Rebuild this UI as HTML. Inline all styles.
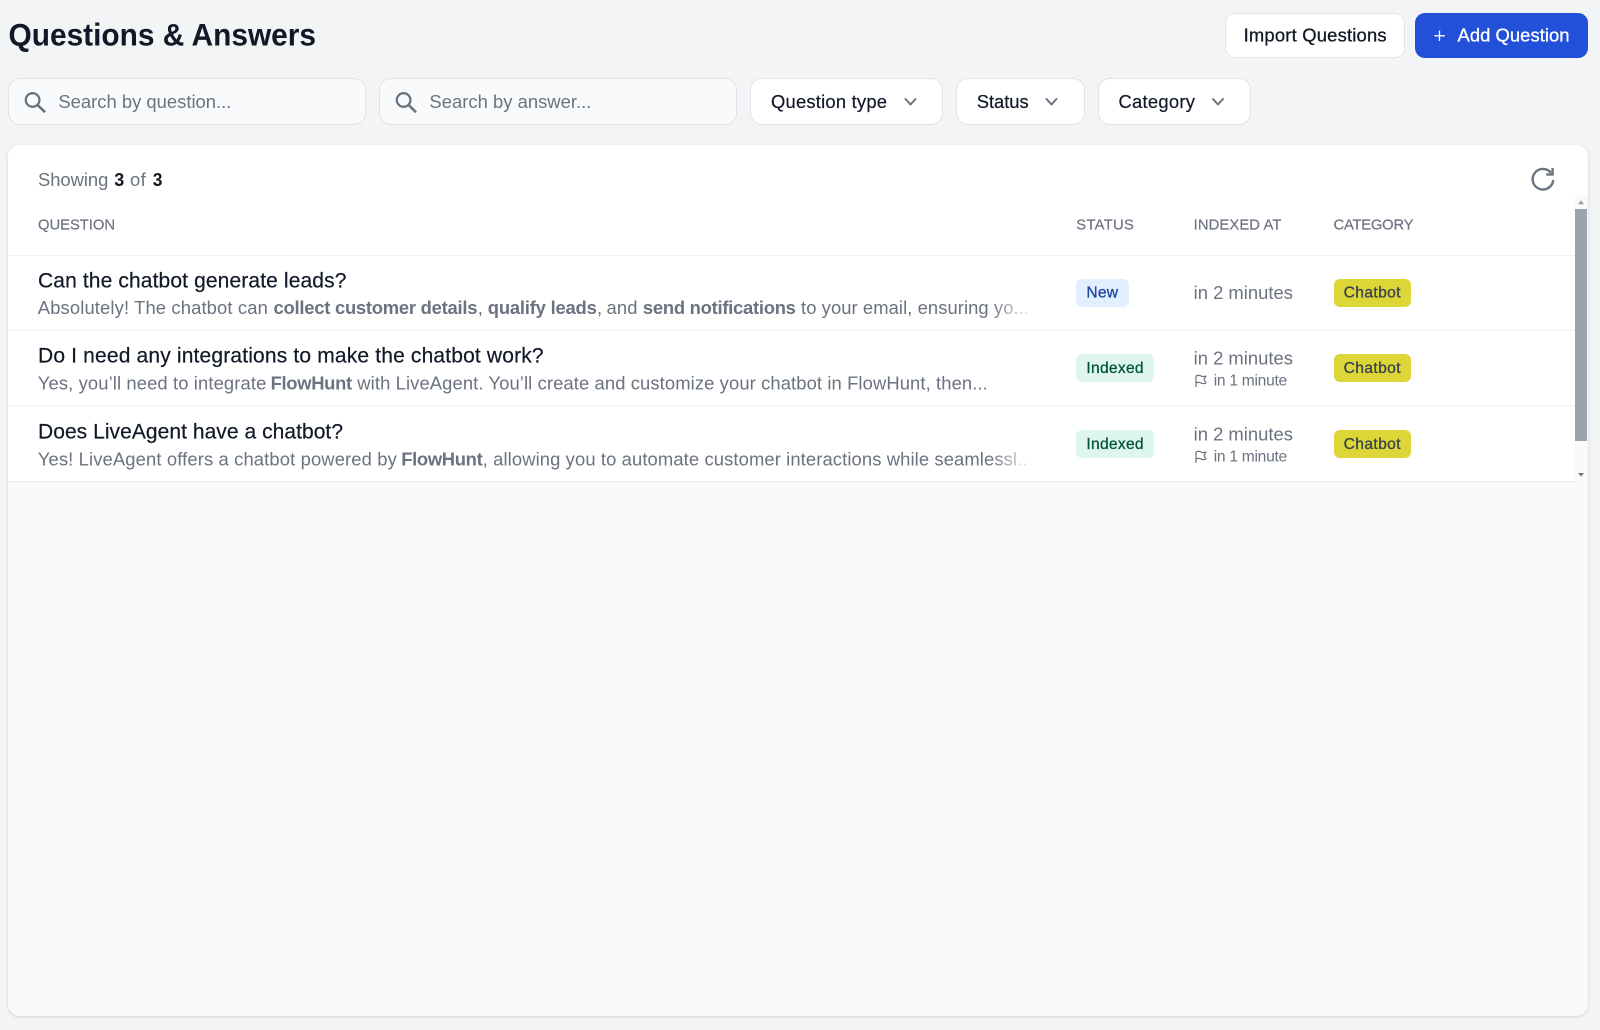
<!DOCTYPE html>
<html lang="en">
<head>
<meta charset="utf-8">
<title>Questions &amp; Answers</title>
<style>
html,body{margin:0;padding:0;width:1600px;height:1030px;overflow:hidden;background:#f3f4f6;font-family:"Liberation Sans",sans-serif}
.b{position:absolute;box-sizing:border-box}
.field{border:1px solid #e0e3e8;border-radius:12px;top:78px;height:47px}
svg.t{position:absolute;left:0;top:0;width:1600px;height:1030px;filter:blur(.3px)}
text{font-family:"Liberation Sans",sans-serif;white-space:pre}
.m{stroke:currentColor;stroke-width:.3}
.s{stroke:currentColor;stroke-width:.2}
.badge{border-radius:6px}
.line{left:8px;width:1567px;height:1px;background:#eef0f3}
</style>
</head>
<body>
<div class="b" style="left:1225px;top:12.5px;width:180px;height:45.5px;background:#fff;border:1px solid #e3e5ea;border-radius:10px"></div>
<div class="b" style="left:1414.5px;top:13px;width:173px;height:45px;background:#2250d8;border-radius:10px"></div>

<div class="b field" style="left:8px;width:358px;background:#f9fafb"></div>
<div class="b field" style="left:379px;width:358px;background:#f9fafb"></div>
<div class="b field" style="left:750px;width:193px;background:#fff"></div>
<div class="b field" style="left:956px;width:129px;background:#fff"></div>
<div class="b field" style="left:1098px;width:153px;background:#fff"></div>

<div class="b" style="left:8px;top:145px;width:1579.5px;height:871px;background:#f9fafb;border-radius:12px;box-shadow:0 1px 3px rgba(0,0,0,.14);overflow:hidden">
  <div class="b" style="left:0;top:0;width:100%;height:50px;background:#fff"></div>
  <div class="b" style="left:0;top:50px;width:1567px;height:287px;background:#fff"></div>
  <div class="b" style="left:1567px;top:50px;width:12.5px;height:287px;background:#f9fafb"></div>
  <div class="b" style="left:1567px;top:64px;width:11.5px;height:232px;background:#9ca3af"></div>
</div>
<div class="b line" style="top:255px"></div>
<div class="b line" style="top:330px"></div>
<div class="b line" style="top:405px"></div>
<div class="b line" style="top:481px;background:#e9ebef"></div>

<div class="b badge" style="left:1076px;top:279px;width:53px;height:28px;background:#e1effe"></div>
<div class="b badge" style="left:1076px;top:354px;width:78px;height:28px;background:#def7ec"></div>
<div class="b badge" style="left:1076px;top:430px;width:78px;height:27.5px;background:#def7ec"></div>
<div class="b badge" style="left:1334px;top:279px;width:77px;height:28px;background:#dcd636"></div>
<div class="b badge" style="left:1334px;top:354px;width:77px;height:28px;background:#dcd636"></div>
<div class="b badge" style="left:1334px;top:430px;width:77px;height:27.5px;background:#dcd636"></div>

<svg class="t" viewBox="0 0 1600 1030" xmlns="http://www.w3.org/2000/svg">
  <defs>
    <linearGradient id="fade" x1="0" x2="1" y1="0" y2="0">
      <stop offset="0" stop-color="#fff" stop-opacity="0"/>
      <stop offset="1" stop-color="#fff" stop-opacity="1"/>
    </linearGradient>
  </defs>

  <!-- header -->
  <text x="8.5" y="45.4" font-size="31.5" font-weight="700" fill="#111827" textLength="307.5" lengthAdjust="spacingAndGlyphs">Questions &amp; Answers</text>
  <text class="m" color="#111827" x="1243.6" y="41.7" font-size="18.4" fill="#111827" textLength="143" lengthAdjust="spacing">Import Questions</text>
  <path d="M1439.500 30.500v10.500M1434.300 35.800h10.500" stroke="#fff" stroke-width="1.3" fill="none"/>
  <text class="m" color="#fff" x="1457.500" y="41.7" font-size="18.4" fill="#fff" textLength="112" lengthAdjust="spacing">Add Question</text>

  <!-- search -->
  <g fill="none" stroke="#6b7280" stroke-width="2.3">
    <circle cx="32.600" cy="100" r="6.800"/><path d="M37.600 105l7.400 7.200" stroke-width="2.600"/>
    <circle cx="403.600" cy="100" r="6.800"/><path d="M408.600 105l7.400 7.200" stroke-width="2.600"/>
  </g>
  <text x="58.400" y="108" font-size="18.4" fill="#6b7280" textLength="173" lengthAdjust="spacing">Search by question...</text>
  <text x="429.400" y="108" font-size="18.4" fill="#6b7280" textLength="162" lengthAdjust="spacing">Search by answer...</text>

  <!-- filters -->
  <text class="s" color="#111827" x="771" y="108" font-size="18.4" fill="#111827" textLength="116" lengthAdjust="spacing">Question type</text>
  <text class="s" color="#111827" x="976.700" y="108" font-size="18.4" fill="#111827" textLength="52" lengthAdjust="spacing">Status</text>
  <text class="s" color="#111827" x="1118.500" y="108" font-size="18.4" fill="#111827" textLength="76.500" lengthAdjust="spacing">Category</text>
  <g fill="none" stroke="#6b7280" stroke-width="2" stroke-linecap="round" stroke-linejoin="round">
    <path d="M905.500 99l5 5.500 5-5.500"/><path d="M1046.500 99l5 5.500 5-5.500"/><path d="M1213 99l5 5.500 5-5.500"/>
  </g>

  <!-- showing -->
  <text x="38" y="186" font-size="18.4" fill="#6b7280" textLength="70.300" lengthAdjust="spacing">Showing</text>
  <text x="114.300" y="186" font-size="18.4" font-weight="700" fill="#111827" textLength="10" lengthAdjust="spacingAndGlyphs">3</text>
  <text x="130" y="186" font-size="18.4" fill="#6b7280" textLength="15.700" lengthAdjust="spacing">of</text>
  <text x="152.700" y="186" font-size="18.4" font-weight="700" fill="#111827" textLength="9.700" lengthAdjust="spacingAndGlyphs">3</text>
  <g fill="none" stroke="#6b7280" stroke-width="2.4">
    <path d="M1551 172.800A10.300 10.300 0 1 0 1553.200 180"/>
    <path d="M1552.600 168v6.400h-6.400" stroke-linejoin="miter"/>
  </g>

  <!-- table header -->
  <g font-size="14.8" fill="#6b7280" class="s" color="#6b7280">
    <text x="38" y="229.300" textLength="77" lengthAdjust="spacing">QUESTION</text>
    <text x="1076.300" y="229.300" textLength="57.600" lengthAdjust="spacing">STATUS</text>
    <text x="1193.600" y="229.300" textLength="87.800" lengthAdjust="spacing">INDEXED AT</text>
    <text x="1333.500" y="229.300" textLength="80" lengthAdjust="spacing">CATEGORY</text>
  </g>

  <!-- questions -->
  <g font-size="21" fill="#111827" class="s" color="#111827">
    <text x="38" y="287.300" textLength="308.400" lengthAdjust="spacing">Can the chatbot generate leads?</text>
    <text x="38" y="362.700" textLength="505.600" lengthAdjust="spacing">Do I need any integrations to make the chatbot work?</text>
    <text x="38" y="438.300" textLength="305" lengthAdjust="spacing">Does LiveAgent have a chatbot?</text>
  </g>

  <!-- answers -->
  <g font-size="18.4" fill="#6b7280">
    <text x="37.800" y="314" textLength="230" lengthAdjust="spacing">Absolutely! The chatbot can</text>
    <text x="273.500" y="314" font-weight="700" textLength="204" lengthAdjust="spacing">collect customer details</text>
    <text x="477.800" y="314">,</text>
    <text x="487.800" y="314" font-weight="700" textLength="109" lengthAdjust="spacing">qualify leads</text>
    <text x="597" y="314">,</text>
    <text x="606.500" y="314" textLength="31" lengthAdjust="spacing">and</text>
    <text x="642.900" y="314" font-weight="700" textLength="153" lengthAdjust="spacing">send notifications</text>
    <text x="801" y="314" textLength="228" lengthAdjust="spacing">to your email, ensuring yo...</text>

    <text x="37.800" y="389.300" textLength="228.500" lengthAdjust="spacing">Yes, you’ll need to integrate</text>
    <text x="270.600" y="389.300" font-weight="700" textLength="81.500" lengthAdjust="spacing">FlowHunt</text>
    <text x="357.300" y="389.300" textLength="630.500" lengthAdjust="spacing">with LiveAgent. You’ll create and customize your chatbot in FlowHunt, then...</text>

    <text x="37.800" y="465.700" textLength="359" lengthAdjust="spacing">Yes! LiveAgent offers a chatbot powered by</text>
    <text x="401.200" y="465.700" font-weight="700" textLength="81.500" lengthAdjust="spacing">FlowHunt</text>
    <text x="482.700" y="465.700" textLength="550" lengthAdjust="spacing">, allowing you to automate customer interactions while seamlessl...</text>
  </g>
  <rect x="990" y="298" width="44" height="22" fill="url(#fade)"/>
  <rect x="990" y="450" width="44" height="22" fill="url(#fade)"/>

  <!-- badges -->
  <g font-size="15.6" class="m">
    <text color="#1e429f" fill="#1e429f" x="1086.400" y="297.300" textLength="31.600" lengthAdjust="spacing">New</text>
    <text color="#03543f" fill="#03543f" x="1086.400" y="373" textLength="57.200" lengthAdjust="spacing">Indexed</text>
    <text color="#03543f" fill="#03543f" x="1086.400" y="449" textLength="57.200" lengthAdjust="spacing">Indexed</text>
    <text color="#374151" fill="#374151" x="1343.600" y="297.300" textLength="57" lengthAdjust="spacing">Chatbot</text>
    <text color="#374151" fill="#374151" x="1343.600" y="373" textLength="57" lengthAdjust="spacing">Chatbot</text>
    <text color="#374151" fill="#374151" x="1343.600" y="449" textLength="57" lengthAdjust="spacing">Chatbot</text>
  </g>

  <!-- times -->
  <g font-size="18.4" fill="#6b7280">
    <text x="1193.600" y="299" textLength="99.300" lengthAdjust="spacing">in 2 minutes</text>
    <text x="1193.600" y="364.300" textLength="99.300" lengthAdjust="spacing">in 2 minutes</text>
    <text x="1193.600" y="440.300" textLength="99.300" lengthAdjust="spacing">in 2 minutes</text>
  </g>
  <g font-size="15.6" fill="#6b7280">
    <text x="1213.700" y="385.300" textLength="73.500" lengthAdjust="spacing">in 1 minute</text>
    <text x="1213.700" y="461.300" textLength="73.500" lengthAdjust="spacing">in 1 minute</text>
  </g>
  <g fill="none" stroke="#6b7280" stroke-width="1.2" stroke-linejoin="round">
    <path d="M1196 387v-11c2-.9 3.400-.9 5 0s3 .9 5 0l-2 3.500 2 3.500c-2 .9-3.400.9-5 0s-3-.9-5 0"/>
    <path d="M1196 463v-11c2-.9 3.400-.9 5 0s3 .9 5 0l-2 3.500 2 3.500c-2 .9-3.400.9-5 0s-3-.9-5 0"/>
  </g>

  <!-- scrollbar arrows -->
  <path d="M1581 200.200l3 4h-6z" fill="#9ca3af"/>
  <path d="M1581 476.500l3-3.500h-6z" fill="#6b7280"/>
</svg>
</body>
</html>
